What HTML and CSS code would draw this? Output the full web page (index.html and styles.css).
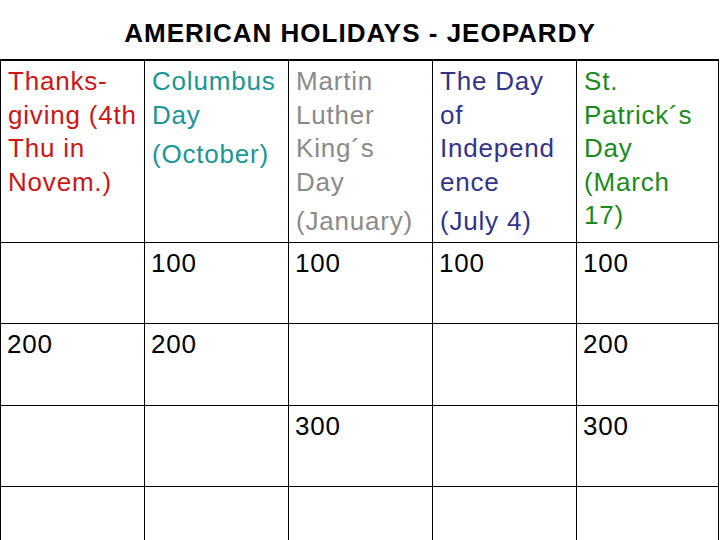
FILE: index.html
```html
<!DOCTYPE html>
<html>
<head>
<meta charset="utf-8">
<link rel="stylesheet" href="styles.css">
</head>
<body>
<h1 class="title">AMERICAN HOLIDAYS - JEOPARDY</h1>
<div class="board">
  <div class="cell head red"><p>Thanks-<br>giving (4th<br>Thu in<br>Novem.)</p></div>
  <div class="cell head teal"><p>Columbus<br>Day</p><p class="sub">(October)</p></div>
  <div class="cell head gray"><p>Martin<br>Luther<br>King´s<br>Day</p><p class="sub">(January)</p></div>
  <div class="cell head navy"><p>The Day<br>of<br>Independ<br>ence</p><p class="sub">(July 4)</p></div>
  <div class="cell head green"><p>St.<br>Patrick´s<br>Day<br>(March<br>17)</p></div>

  <div class="cell"></div>
  <div class="cell">100</div>
  <div class="cell">100</div>
  <div class="cell">100</div>
  <div class="cell">100</div>

  <div class="cell">200</div>
  <div class="cell">200</div>
  <div class="cell"></div>
  <div class="cell"></div>
  <div class="cell">200</div>

  <div class="cell"></div>
  <div class="cell"></div>
  <div class="cell">300</div>
  <div class="cell"></div>
  <div class="cell">300</div>

  <div class="cell last"></div>
  <div class="cell last"></div>
  <div class="cell last"></div>
  <div class="cell last"></div>
  <div class="cell last"></div>
</div>
</body>
</html>
```
FILE: styles.css
```css
html, body {
  margin: 0;
  padding: 0;
  background: #ffffff;
}
body {
  font-family: "Liberation Sans", Arial, sans-serif;
  color: #000;
  width: 720px;
  height: 540px;
  overflow: hidden;
}
.title {
  box-sizing: border-box;
  height: 59px;
  margin: 0;
  padding-top: 18px;
  font-size: 26px;
  line-height: 30px;
  font-weight: bold;
  letter-spacing: 1px;
  text-align: center;
}
.board {
  display: grid;
  grid-template-columns: 144px 144px 144px 144px 142px;
  grid-template-rows: 182px 81px 82px 81px 53px;
  width: 719px;
  box-sizing: border-box;
  border-top: 2px solid #000;
  border-left: 1px solid #000;
}
.cell {
  box-sizing: border-box;
  border-right: 1px solid #000;
  border-bottom: 1px solid #000;
  padding: 4px 6px 0 6px;
  font-size: 26px;
  line-height: 33.5px;
  letter-spacing: 0.8px;
  white-space: nowrap;
}
.cell.last {
  border-bottom: none;
}
.head {
  padding-left: 7px;
}
.cell p {
  margin: 0;
}
.cell .sub {
  margin-top: 6px;
}
.red { color: #cc1616; }
.teal { color: #1a9696; }
.gray { color: #8a8a8a; }
.navy { color: #33338a; }
.green { color: #1a8a1e; }
```
